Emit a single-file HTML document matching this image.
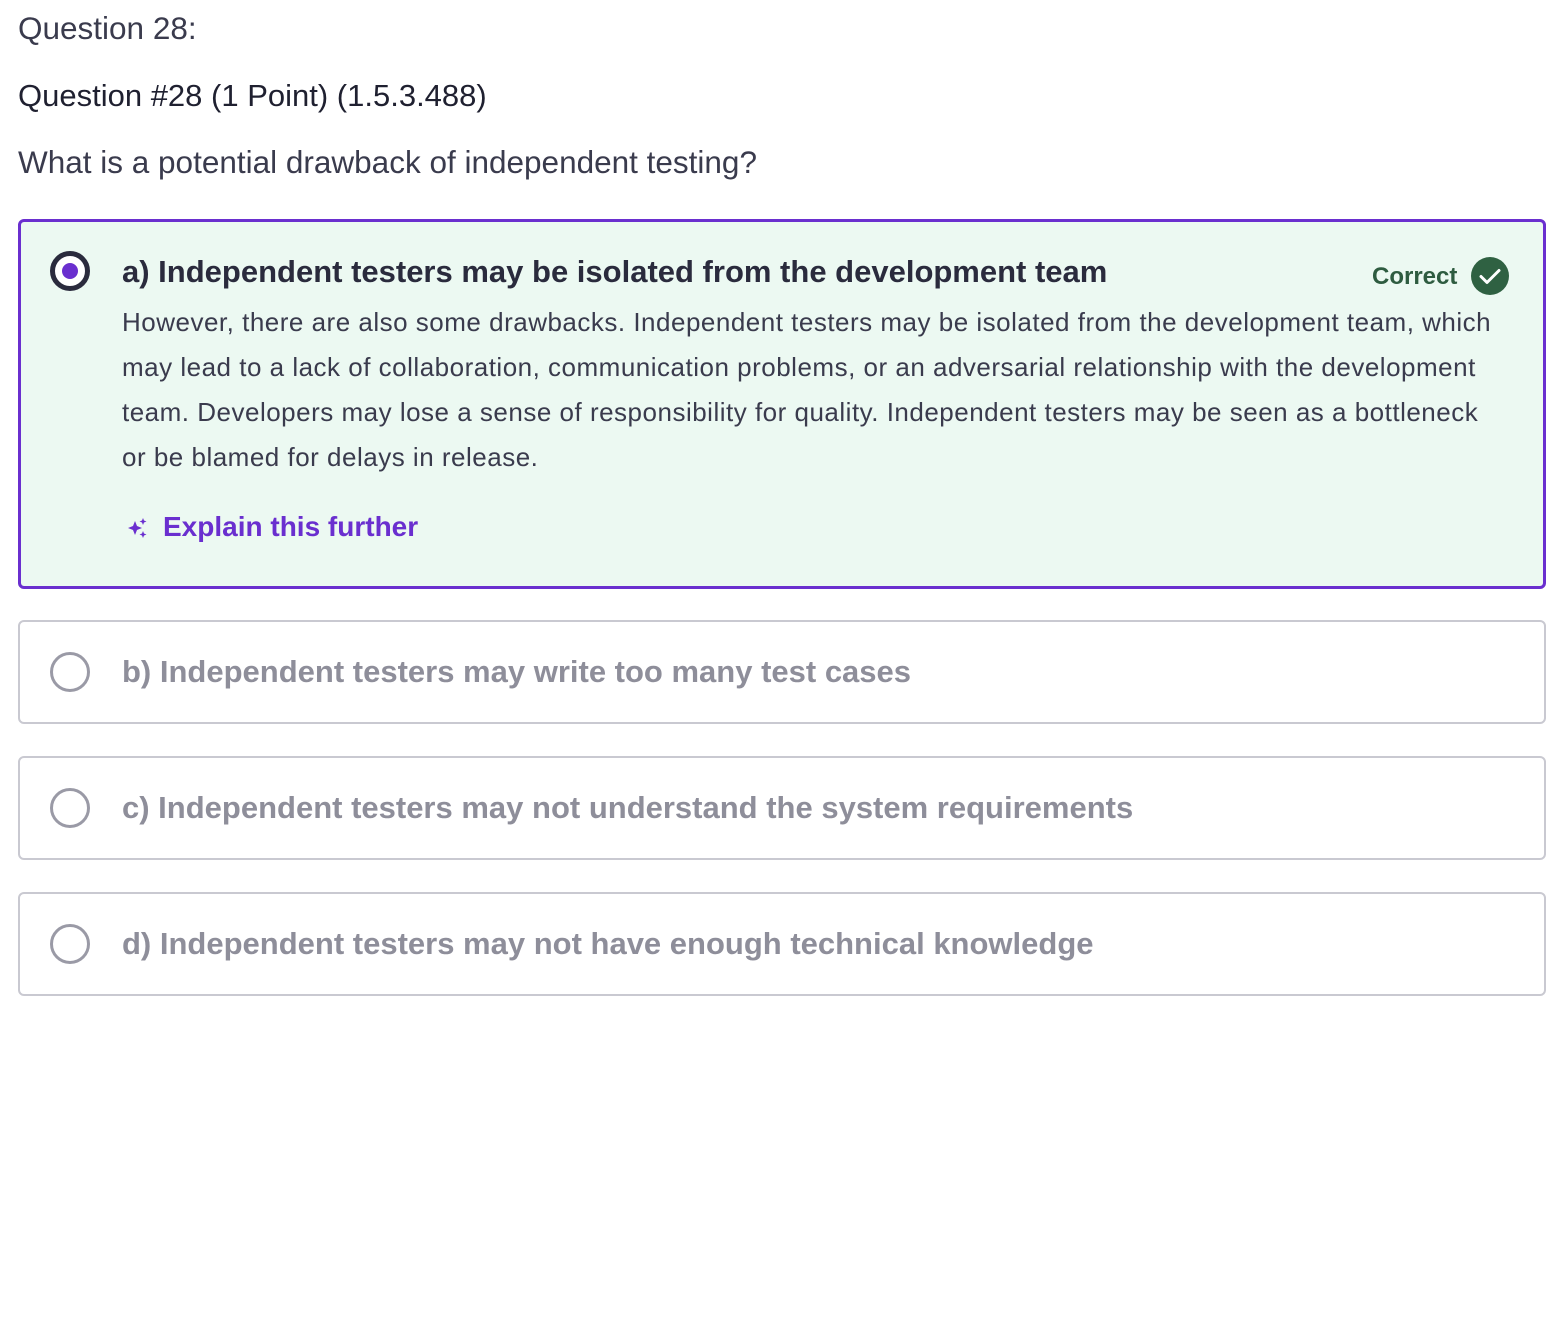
<!DOCTYPE html>
<html><head><meta charset="utf-8"><style>
body{margin:0;background:#fff;font-family:"Liberation Sans",sans-serif;color:#2a2b3d;width:1566px;height:1336px;position:relative;overflow:hidden}
.t{position:absolute;white-space:nowrap}
.box{position:absolute;left:18px;width:1528px;border:2px solid #c9c9d1;border-radius:6px;box-sizing:border-box}
.radio{position:absolute;left:50px;width:40px;height:40px;border:3px solid #9a9aa6;border-radius:50%;box-sizing:border-box}
.opt{position:absolute;left:122px;font-size:31px;font-weight:bold;color:#8e8e9a;white-space:nowrap}
</style></head><body>
<div class="t" style="left:18px;top:10px;font-size:31.5px;color:#3a3b4d">Question 28:</div>
<div class="t" style="left:18px;top:78px;font-size:31px;color:#1f2030">Question #28 (1 Point) (1.5.3.488)</div>
<div class="t" style="left:18px;top:144px;font-size:31.5px;color:#3a3b4d">What is a potential drawback of independent testing?</div>

<div class="box" style="top:219px;height:370px;border:3px solid #6a2fcf;background:#ecf9f2"></div>
<div class="radio" style="top:251px;border:5px solid #2a2b3d;background:#fff"><div style="position:absolute;left:7px;top:7px;width:16px;height:16px;border-radius:50%;background:#6a2fcf"></div></div>
<div class="t" style="left:122px;top:254px;font-size:31px;font-weight:bold;color:#2a2b3d">a) Independent testers may be isolated from the development team</div>
<div class="t" style="left:1372px;top:263px;font-size:24px;font-weight:bold;color:#2e5c40">Correct</div>
<svg style="position:absolute;left:1470px;top:256px" width="40" height="40" viewBox="0 0 40 40"><circle cx="20" cy="20" r="19" fill="#2f6142"/><path d="M11 20.5l6 6 12-12" stroke="#fff" stroke-width="3" fill="none" stroke-linecap="round" stroke-linejoin="round"/></svg>
<div class="t" style="left:122px;top:300px;font-size:26px;letter-spacing:0.5px;line-height:45px;color:#3a3b4d">However, there are also some drawbacks. Independent testers may be isolated from the development team, which<br>may lead to a lack of collaboration, communication problems, or an adversarial relationship with the development<br>team. Developers may lose a sense of responsibility for quality. Independent testers may be seen as a bottleneck<br>or be blamed for delays in release.</div>
<svg style="position:absolute;left:127px;top:517px" width="22" height="22" viewBox="0 0 22 22" fill="#6a2fcf"><path d="M8 4l2 5 5 2-5 2-2 5-2-5-5-2 5-2z"/><path d="M16 1l1 2.5 2.5 1-2.5 1-1 2.5-1-2.5-2.5-1 2.5-1z"/><path d="M16 14l1 2.5 2.5 1-2.5 1-1 2.5-1-2.5-2.5-1 2.5-1z"/></svg>
<div class="t" style="left:163px;top:511px;font-size:28px;font-weight:bold;color:#6a2fcf">Explain this further</div>

<div class="box" style="top:620px;height:104px"></div>
<div class="radio" style="top:652px"></div>
<div class="opt" style="top:654px">b) Independent testers may write too many test cases</div>

<div class="box" style="top:756px;height:104px"></div>
<div class="radio" style="top:788px"></div>
<div class="opt" style="top:790px">c) Independent testers may not understand the system requirements</div>

<div class="box" style="top:892px;height:104px"></div>
<div class="radio" style="top:924px"></div>
<div class="opt" style="top:926px">d) Independent testers may not have enough technical knowledge</div>
</body></html>
